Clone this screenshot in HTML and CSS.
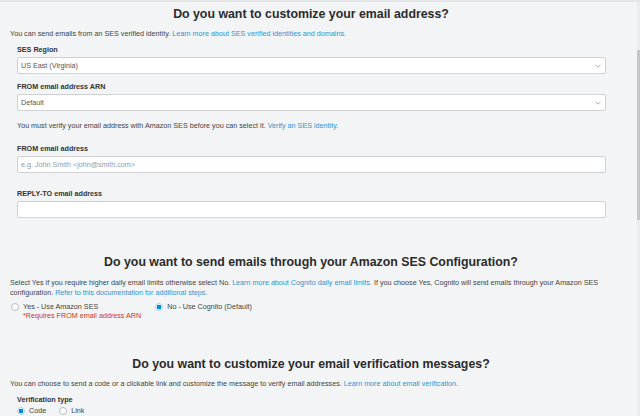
FILE: index.html
```html
<!DOCTYPE html>
<html lang="en">
<head>
    <meta charset="UTF-8">
    <meta name="viewport" content="width=device-width, initial-scale=1.0">
    <title>Message customizations</title>
    <link rel="stylesheet" href="styles.css">
</head>
<body>
    <div class="page">
        <div class="content">

            <!-- email address -->
            <section class="block">
                <h2 class="title">Do you want to customize your email address?</h2>
                <p class="desc">You can send emails from an SES verified identity. <a href="#">Learn more about SES verified identities and domains.</a></p>

                <div class="field">
                    <label>SES Region</label>
                    <div class="select">
                        <span>US East (Virginia)</span>
                        <svg width="6" height="4" viewBox="0 0 6 4"><path d="M0.5 0.8 L3 3.2 L5.5 0.8" fill="none" stroke="#999" stroke-width="0.8"/></svg>
                    </div>
                </div>

                <div class="field">
                    <label>FROM email address ARN</label>
                    <div class="select">
                        <span>Default</span>
                        <svg width="6" height="4" viewBox="0 0 6 4"><path d="M0.5 0.8 L3 3.2 L5.5 0.8" fill="none" stroke="#999" stroke-width="0.8"/></svg>
                    </div>
                </div>

                <p class="note">You must verify your email address with Amazon SES before you can select it. <a href="#">Verify an SES identity.</a></p>

                <div class="field field-from">
                    <label>FROM email address</label>
                    <input type="text" placeholder="e.g. John Smith <john@smith.com>">
                </div>

                <div class="field field-reply">
                    <label>REPLY-TO email address</label>
                    <input type="text">
                </div>
            </section>

            <!-- SES configuration -->
            <section class="block block-ses">
                <h2 class="title">Do you want to send emails through your Amazon SES Configuration?</h2>
                <p class="desc">Select Yes if you require higher daily email limits otherwise select No. <a href="#">Learn more about Cognito daily email limits.</a> If you choose Yes, Cognito will send emails through your Amazon SES configuration. <a href="#">Refer to this documentation for additional steps.</a></p>

                <div class="radios">
                    <div class="radio">
                        <span class="dot"></span>
                        <div>
                            <div>Yes - Use Amazon SES</div>
                            <div class="warn">*Requires FROM email address ARN</div>
                        </div>
                    </div>
                    <div class="radio">
                        <span class="dot checked"></span>
                        <div>No - Use Cognito (Default)</div>
                    </div>
                </div>
            </section>

            <!-- verification messages -->
            <section class="block block-verify">
                <h2 class="title">Do you want to customize your email verification messages?</h2>
                <p class="desc">You can choose to send a code or a clickable link and customize the message to verify email addresses. <a href="#">Learn more about email verification.</a></p>

                <div class="field">
                    <label>Verification type</label>
                    <div class="radios small">
                        <div class="radio"><span class="dot checked"></span><div>Code</div></div>
                        <div class="radio"><span class="dot"></span><div>Link</div></div>
                    </div>
                </div>
            </section>
        </div>

        <div class="scrollbar">
            <div class="thumb"></div>
        </div>
    </div>
</body>
</html>
```

FILE: styles.css
```css
body {
    margin: 0;
    padding: 0;
    font-family: "Liberation Sans", Arial, sans-serif;
    background-color: #f2f4f5;
    color: #444;
}

.page {
    display: flex;
    height: 416px;
    border-top: 2px solid #e4e6e7;
    box-sizing: border-box;
    overflow: hidden;
}

.content {
    flex: 1;
    padding: 5px 0 0 10px;
}

.scrollbar {
    width: 3px;
    background-color: #eaeced;
    padding-top: 48px;
}

    .scrollbar .thumb {
        height: 170px;
        background-color: #c4c6c7;
    }

.title {
    margin: 0;
    text-align: center;
    font-size: 12.35px;
    line-height: 14px;
    color: #2b2b2b;
    padding-right: 25px;
}

.desc {
    margin: 8px 0 0;
    font-size: 7.2px;
    line-height: 10px;
    width: 595px;
}

a {
    color: #2e95d3;
    text-decoration: none;
}

.field {
    margin: 6px 0 0 7px;
    width: 589px;
}

    .field label {
        display: block;
        font-size: 7.2px;
        line-height: 10px;
        font-weight: bold;
        color: #333;
        margin-bottom: 2px;
    }

.field + .field {
    margin-top: 8px;
}

.select, .field input {
    box-sizing: border-box;
    width: 100%;
    height: 17px;
    background-color: #fff;
    border: 1px solid #cfd1d2;
    border-radius: 2px;
    font-size: 7.2px;
    color: #555;
}

.select {
    display: flex;
    align-items: center;
    justify-content: space-between;
    padding: 0 4px 0 3px;
}

.field input {
    display: block;
    margin: 0;
    padding: 0 3px;
    font-family: inherit;
    outline: none;
}

    .field input::placeholder {
        color: #999;
    }

.note {
    margin: 10px 0 0 7px;
    font-size: 7.2px;
    line-height: 10px;
}

.field.field-from {
    margin-top: 13px;
}

.field.field-reply {
    margin-top: 16px;
}

.block-ses {
    margin-top: 37px;
}

    .block-ses .desc {
        margin-top: 9px;
    }

.radios {
    display: flex;
    gap: 14px;
    margin: 4px 0 0 1px;
    font-size: 7.2px;
    line-height: 9px;
}

.radio {
    display: flex;
    align-items: flex-start;
    gap: 4px;
}

.dot {
    box-sizing: border-box;
    width: 8px;
    height: 8px;
    margin-top: 1px;
    border-radius: 50%;
    border: 1px solid #b8babb;
    background-color: #fff;
}

    .dot.checked {
        border-color: #a9d4ef;
        background: radial-gradient(circle, #0a8ad6 0, #0a8ad6 2.2px, #fff 2.6px);
    }

.warn {
    color: #d13212;
}

.block-verify {
    margin-top: 37px;
}

    .block-verify .desc {
        margin-top: 8px;
    }

    .block-verify .field {
        margin-top: 6px;
    }

    .block-verify .field label {
        margin-bottom: 1px;
    }

.radios.small {
    gap: 13px;
    margin: 0;
}
```
